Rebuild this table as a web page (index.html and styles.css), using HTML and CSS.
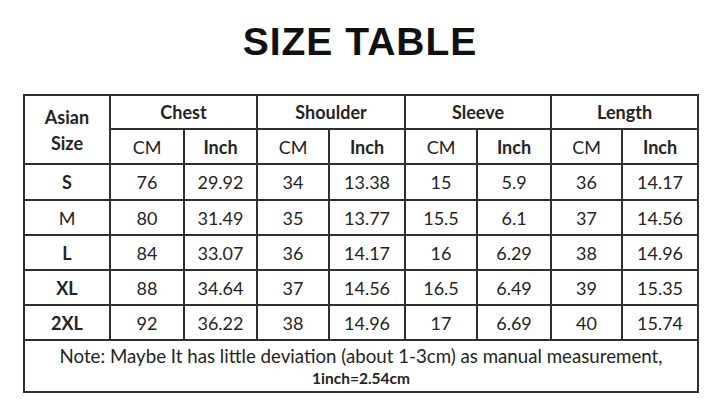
FILE: index.html
```html
<!DOCTYPE html>
<html>
<head>
<meta charset="utf-8">
<link rel="stylesheet" href="styles.css">
</head>
<body>
<div class="page">
  <h1 class="title">SIZE TABLE</h1>
  <table class="size-table">
    <colgroup>
      <col class="c-size">
      <col class="c74"><col class="c73">
      <col class="c72"><col class="c76">
      <col class="c72"><col class="c74">
      <col class="c71"><col class="c76">
    </colgroup>
    <tr class="h1">
      <th rowspan="2" class="b">Asian<br>Size</th>
      <th colspan="2" class="b">Chest</th>
      <th colspan="2" class="b">Shoulder</th>
      <th colspan="2" class="b">Sleeve</th>
      <th colspan="2" class="b">Length</th>
    </tr>
    <tr class="h2">
      <td>CM</td><td class="b">Inch</td>
      <td>CM</td><td class="b">Inch</td>
      <td>CM</td><td class="b">Inch</td>
      <td>CM</td><td class="b">Inch</td>
    </tr>
    <tr class="r36">
      <td class="b">S</td><td>76</td><td>29.92</td><td>34</td><td>13.38</td><td>15</td><td>5.9</td><td>36</td><td>14.17</td>
    </tr>
    <tr class="r35">
      <td>M</td><td>80</td><td>31.49</td><td>35</td><td>13.77</td><td>15.5</td><td>6.1</td><td>37</td><td>14.56</td>
    </tr>
    <tr class="r35">
      <td class="b">L</td><td>84</td><td>33.07</td><td>36</td><td>14.17</td><td>16</td><td>6.29</td><td>38</td><td>14.96</td>
    </tr>
    <tr class="r35">
      <td class="b">XL</td><td>88</td><td>34.64</td><td>37</td><td>14.56</td><td>16.5</td><td>6.49</td><td>39</td><td>15.35</td>
    </tr>
    <tr class="r35">
      <td class="b">2XL</td><td>92</td><td>36.22</td><td>38</td><td>14.96</td><td>17</td><td>6.69</td><td>40</td><td>15.74</td>
    </tr>
    <tr class="note-row">
      <td colspan="9" class="note">
        <div class="note-line">Note: Maybe It has little deviation (about 1-3cm) as manual measurement,</div>
        <div class="note-conv">1inch=2.54cm</div>
      </td>
    </tr>
  </table>
</div>
</body>
</html>
```

FILE: styles.css
```css
html, body {
  margin: 0;
  padding: 0;
  background: #ffffff;
}

.page {
  width: 720px;
  height: 407px;
  overflow: hidden;
}

.title {
  margin: 22px 0 0 0;
  height: 39px;
  line-height: 39px;
  font-family: "Liberation Sans", Arial, sans-serif;
  font-weight: 700;
  font-size: 39px;
  letter-spacing: 1px;
  text-align: center;
  color: #111111;
}

.size-table {
  margin: 33px 0 0 23px;
  border-collapse: collapse;
  table-layout: fixed;
  width: 676px;
  font-family: Lato, "Open Sans", sans-serif;
  font-size: 18px;
  color: #242424;
}

.size-table th,
.size-table td {
  border: 2px solid #303030;
  padding: 0;
  text-align: center;
  vertical-align: middle;
  font-weight: 400;
  line-height: 22px;
}

.size-table .b {
  font-weight: 700;
}

.c-size { width: 86px; }
.c71 { width: 71px; }
.c72 { width: 72px; }
.c73 { width: 73px; }
.c74 { width: 74px; }
.c76 { width: 76px; }

.h1 { height: 34px; }
.h2 { height: 35px; }
.r36 { height: 36px; }
.r35 { height: 35px; }
.note-row { height: 52px; }

.size-table th[rowspan] {
  line-height: 26px;
}

.note-line {
  font-size: 18.7px;
  line-height: 24px;
}

.note-conv {
  font-size: 15.5px;
  font-weight: 700;
  line-height: 20px;
}
```
